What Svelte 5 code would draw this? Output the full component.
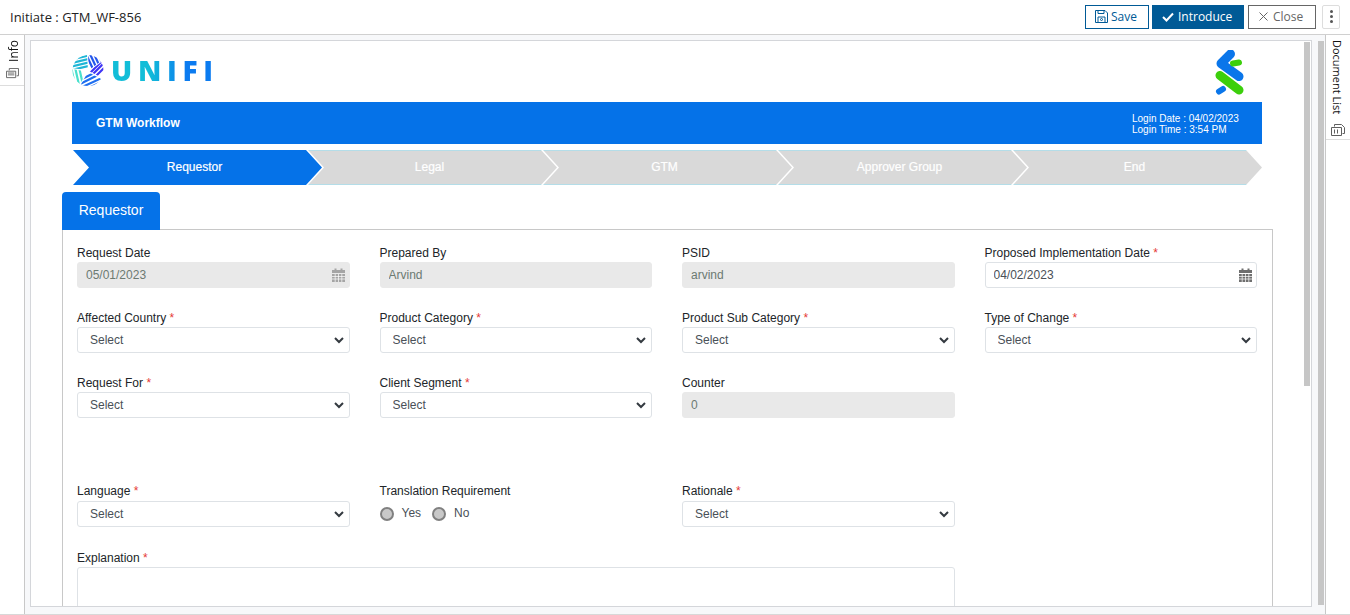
<script>
  const steps = ["Requestor", "Legal", "GTM", "Approver Group", "End"];

  const rows = [
    [
      { label: "Request Date", type: "date", value: "05/01/2023", disabled: true },
      { label: "Prepared By", type: "text", value: "Arvind", disabled: true },
      { label: "PSID", type: "text", value: "arvind", disabled: true },
      { label: "Proposed Implementation Date", type: "date", value: "04/02/2023", required: true },
    ],
    [
      { label: "Affected Country", type: "select", required: true },
      { label: "Product Category", type: "select", required: true },
      { label: "Product Sub Category", type: "select", required: true },
      { label: "Type of Change", type: "select", required: true },
    ],
    [
      { label: "Request For", type: "select", required: true },
      { label: "Client Segment", type: "select", required: true },
      { label: "Counter", type: "text", value: "0", disabled: true },
    ],
    [
      { label: "Language", type: "select", required: true },
      { label: "Translation Requirement", type: "radio" },
      { label: "Rationale", type: "select", required: true },
    ],
  ];
</script>

<div class="page">
  <header class="topbar">
    <span class="title">Initiate : GTM_WF-856</span>
    <div class="actions">
      <button class="btn save">
        <svg width="13" height="13" viewBox="0 0 13 13" fill="none" stroke="currentColor">
          <path d="M.5.5h9.5l2.5 2.5v9.500H.5z" />
          <path d="M3 .5v3h6v-3M3 12.500V7h7v5.500" />
          <circle cx="6.500" cy="9.500" r="1" />
        </svg>
        Save
      </button>
      <button class="btn primary">
        <svg width="12" height="10" viewBox="0 0 12 10" fill="none" stroke="currentColor" stroke-width="2">
          <path d="M1 5l3.500 3.500L11 1.500" />
        </svg>
        Introduce
      </button>
      <button class="btn close">
        <svg width="9" height="9" viewBox="0 0 9 9" fill="none" stroke="currentColor">
          <path d="M.5.5l8 8M8.500.5l-8 8" />
        </svg>
        Close
      </button>
      <button class="kebab" aria-label="More">
        <i></i><i></i><i></i>
      </button>
    </div>
  </header>

  <div class="body">
    <aside class="rail left">
      <div class="rail-item">
        <span class="rail-text up">Info</span>
        <svg width="13" height="11" viewBox="0 0 14 12" fill="none" stroke="#5f5f5f">
          <path d="M3.500 2.500V.5h10v8h-2" />
          <path d="M.5 3.500h10v7H.5z" fill="#fff" />
          <path d="M2 5.500h7M2 7.500h7" />
        </svg>
      </div>
    </aside>

    <main class="main">
      <div class="frame">
        <div class="sheet">
          <div class="logos">
            <div class="unifi">
              <svg width="32" height="31" viewBox="0 0 32 31" fill="none" stroke-width="2.200">
                <defs>
                  <clipPath id="disc"><circle cx="16" cy="15.500" r="15.500" /></clipPath>
                  <clipPath id="w1"><path d="M16 15.500L0 13V0H15z" /></clipPath>
                  <clipPath id="w2"><path d="M17 15L16 0H32V4z" /></clipPath>
                  <clipPath id="w3"><path d="M17 16L32 5V24z" /></clipPath>
                  <clipPath id="w4"><path d="M16 17L31 25V31H8z" /></clipPath>
                  <clipPath id="w5"><path d="M15 16.500L0 14V31H7z" /></clipPath>
                </defs>
                <g clip-path="url(#disc)">
                  <g clip-path="url(#w1)" stroke="#1fb6d6">
                    <path d="M0 4.500L17 .5M0 8L17 4M0 11.500L17 7.500M0 15L17 11" />
                  </g>
                  <g clip-path="url(#w2)" stroke="#2457ec">
                    <path d="M14 -1L21 14M18 -1L25 14M22 -1L29 14M26 -1L33 14" />
                  </g>
                  <g clip-path="url(#w3)" stroke="#3f35f5">
                    <path d="M16 20L32 4M18 22L34 6M20 25L36 9" />
                  </g>
                  <g clip-path="url(#w4)" stroke="#1f6ff0">
                    <path d="M8 25L30 14M8 29L30 18M8 33L32 22M10 36L34 25" />
                  </g>
                  <g clip-path="url(#w5)" stroke="#48e0cc">
                    <path d="M-1 12L3 30M3 12L7 30M7 12L11 30" />
                  </g>
                </g>
              </svg>
              <span class="wordmark">UNIFI</span>
            </div>
            <svg class="sc" width="30" height="46" viewBox="0 0 30 46" fill="none" stroke-linecap="round" stroke-linejoin="round" stroke-width="9">
              <path d="M15.500 4L6 13.500L24 26.500" stroke="#0a76ea" />
              <path d="M5 25.500L24 40" stroke="#3ccf0c" />
              <path d="M18 13.500L24 12.500" stroke="#3ccf0c" stroke-width="6" />
              <path d="M4 41.500L8 39" stroke="#0a76ea" stroke-width="6" />
            </svg>
          </div>

          <div class="banner">
            <strong>GTM Workflow</strong>
            <div class="login">
              <div>Login Date : 04/02/2023</div>
              <div>Login Time : 3:54 PM</div>
            </div>
          </div>

          <div class="steps">
            {#each steps as step, i}
              <div class="step" class:active={i === 0}>{step}</div>
            {/each}
          </div>

          <div class="tabs">
            <div class="tab">Requestor</div>
          </div>

          <section class="panel">
            {#each rows as row, r}
              <div class="row" class:spaced={r === 3}>
                {#each row as field}
                  <div class="field">
                    <label>
                      {field.label}
                      {#if field.required}<span class="req">*</span>{/if}
                    </label>

                    {#if field.type === "select"}
                      <div class="control">
                        <select>
                          <option>Select</option>
                        </select>
                        <svg class="chevron" width="10" height="7" viewBox="0 0 10 7" fill="none" stroke="#343a40" stroke-width="2">
                          <path d="M1 1l4 4 4-4" />
                        </svg>
                      </div>
                    {:else if field.type === "radio"}
                      <div class="radios">
                        <label class="radio"><input type="radio" disabled /> Yes</label>
                        <label class="radio"><input type="radio" disabled /> No</label>
                      </div>
                    {:else}
                      <div class="control">
                        <input type="text" value={field.value} disabled={field.disabled} />
                        {#if field.type === "date"}
                          <svg class="cal" class:muted={field.disabled} width="13" height="14" viewBox="0 0 13 14">
                            <path d="M0 2h2.500V.5h2V2h4V.5h2V2H13v3H0z" fill="currentColor" />
                            <path d="M0 6h13v8H0z" fill="currentColor" />
                            <path d="M0 8.500h13M0 11h13M3.200 6v8M6.500 6v8M9.800 6v8" stroke="#fff" stroke-width=".7" />
                          </svg>
                        {/if}
                      </div>
                    {/if}
                  </div>
                {/each}
              </div>
            {/each}

            <div class="row explain">
              <div class="field wide">
                <label>Explanation <span class="req">*</span></label>
                <textarea></textarea>
              </div>
            </div>
          </section>
        </div>

        <div class="scroll inner"></div>
      </div>
      <div class="scroll outer"></div>
    </main>

    <aside class="rail right">
      <div class="rail-item">
        <span class="rail-text down">Document List</span>
        <svg width="14" height="12" viewBox="0 0 14 12" fill="none" stroke="#5f5f5f">
          <path d="M3.500 2.500V.5h7l3 3v6h-2" />
          <path d="M.5 3.500h10v8H.5z" fill="#fff" />
          <path d="M3.500 5.500v4M6.500 5.500v4" />
        </svg>
      </div>
    </aside>
  </div>
</div>

<style>
  :global(body) {
    margin: 0;
    background: #fff;
  }

  .page {
    display: flex;
    flex-direction: column;
    height: 615px;
    overflow: hidden;
    font-family: "Liberation Sans", Arial, sans-serif;
    font-size: 12px;
    color: #212529;
  }

  .topbar {
    flex: none;
    height: 35px;
    box-sizing: border-box;
    display: flex;
    align-items: center;
    justify-content: space-between;
    padding: 0 10px;
    border-bottom: 1px solid #d0d0d0;
    font-family: "Open Sans", sans-serif;
  }

  .title {
    font-size: 13px;
    color: #222;
  }

  .actions {
    display: flex;
    align-items: center;
    margin-top: -1px;
  }

  .btn {
    display: flex;
    align-items: center;
    justify-content: flex-start;
    gap: 4px;
    height: 24px;
    box-sizing: border-box;
    padding: 0 0 0 9px;
    background: #fff;
    border: 1px solid #005a96;
    color: #005a96;
    font-family: "Open Sans", sans-serif;
    font-size: 12px;
  }

  .save {
    width: 64px;
    gap: 3px;
  }

  .primary {
    width: 92px;
    margin-left: 3px;
    background: #005a96;
    color: #fff;
  }

  .close {
    width: 68px;
    margin-left: 4px;
    gap: 5px;
    padding-left: 10px;
    border-color: #666;
    color: #666;
  }

  .kebab {
    width: 18px;
    height: 24px;
    margin-left: 6px;
    padding: 0;
    box-sizing: border-box;
    display: flex;
    flex-direction: column;
    align-items: center;
    justify-content: center;
    gap: 2px;
    background: #fff;
    border: 1px solid #ddd;
    border-radius: 2px;
  }

  .kebab i {
    width: 3px;
    height: 3px;
    border-radius: 50%;
    background: #555;
  }

  .body {
    flex: 1;
    display: flex;
    min-height: 0;
    border-bottom: 1px solid #d8d8d8;
  }

  .rail {
    flex: none;
    box-sizing: border-box;
    background: #fff;
  }

  .rail.left {
    width: 25px;
    border-right: 1px solid #c8c8c8;
  }

  .rail.right {
    width: 25px;
    border-left: 1px solid #c8c8c8;
  }

  .rail-item {
    display: flex;
    flex-direction: column;
    align-items: center;
    gap: 6px;
    padding: 5px 0 6px;
    border-bottom: 1px solid #ddd;
    font-family: "Open Sans", sans-serif;
    font-size: 11px;
    color: #111;
  }

  .rail.left .rail-text {
    font-size: 12px;
    margin-left: 3px;
  }

  .rail.right .rail-item {
    gap: 10px;
    padding-bottom: 3px;
  }

  .rail.right .rail-text {
    margin-right: 2px;
  }

  .rail-text {
    writing-mode: vertical-rl;
    line-height: 14px;
  }

  .rail-text.up {
    transform: rotate(180deg);
  }

  .main {
    flex: 1;
    position: relative;
    display: flex;
    min-width: 0;
    background: #f7f8fa;
    padding: 5px 13px 7px 5px;
  }

  .frame {
    flex: 1;
    position: relative;
    min-width: 0;
    border: 1px solid #d4d6da;
    background: #fff;
    overflow: hidden;
  }

  .sheet {
    box-sizing: border-box;
    padding: 14px 49px 0 31px;
  }

  .logos {
    display: flex;
    align-items: flex-start;
    justify-content: space-between;
    height: 47px;
    padding: 0 17px 0 10px;
  }

  .unifi {
    display: flex;
    align-items: center;
    gap: 7px;
    height: 31px;
  }

  .wordmark {
    font-family: "Open Sans", sans-serif;
    font-weight: 800;
    font-size: 28px;
    line-height: 31px;
    letter-spacing: 5.700px;
    background: linear-gradient(90deg, #12bdd8 0%, #12bdd8 35%, #0b7bf0 70%, #0b7bf0 100%);
    -webkit-background-clip: text;
    background-clip: text;
    color: transparent;
  }

  .sc {
    margin-top: -5px;
  }

  .banner {
    margin-left: 10px;
    height: 42px;
    box-sizing: border-box;
    display: flex;
    align-items: center;
    justify-content: space-between;
    padding: 0 24px;
    background: #0572e8;
    color: #fff;
  }

  .banner strong {
    font-size: 12px;
  }

  .login {
    font-size: 10px;
    line-height: 11px;
    width: 106px;
    margin-top: 1px;
    white-space: nowrap;
  }

  .steps {
    display: flex;
    margin: 6px 0 0 11px;
  }

  .step {
    flex: none;
    width: 249px;
    height: 35px;
    box-sizing: border-box;
    margin-right: -14px;
    padding: 0 6px 2px 0;
    display: flex;
    align-items: center;
    justify-content: center;
    font-size: 12px;
    -webkit-text-stroke: 0.2px #fff;
    color: #fff;
    background: linear-gradient(#b4dde8 1px, #d9d9d9 1px, #d9d9d9 34px, #b4dde8 34px);
    clip-path: polygon(0 0, 233px 0, 249px 17.500px, 233px 35px, 0 35px, 16px 17.500px);
  }

  .step.active {
    background: #0572e8;
  }

  .tabs {
    display: flex;
    margin-top: 7px;
    height: 38px;
  }

  .tab {
    width: 98px;
    box-sizing: border-box;
    height: 38px;
    padding-bottom: 2px;
    display: flex;
    align-items: center;
    justify-content: center;
    background: #0572e8;
    border-radius: 4px 4px 0 0;
    color: #fff;
    font-size: 14px;
  }

  .panel {
    box-sizing: border-box;
    width: 1211px;
    min-height: 400px;
    padding: 16px 15px 0 14px;
    border: 1px solid #c8c8c8;
    margin-top: -1px;
  }

  .row {
    display: grid;
    grid-template-columns: repeat(4, 272.500px);
    column-gap: 30px;
    margin-bottom: 23px;
    min-height: 42px;
  }

  .row.spaced {
    margin-top: 67px;
    margin-bottom: 24px;
  }

  .field {
    display: flex;
    flex-direction: column;
    min-width: 0;
  }

  .field.wide {
    grid-column: span 3;
  }

  .field > label {
    height: 16px;
    line-height: 14px;
    color: #212529;
  }

  .row.spaced .field > label {
    height: 17px;
    margin-top: -1px;
  }

  .req {
    color: #e53935;
  }

  .control {
    position: relative;
    height: 26px;
  }

  select,
  input[type="text"],
  textarea {
    display: block;
    box-sizing: border-box;
    width: 100%;
    margin: 0;
    border: 1px solid #dee2e6;
    border-radius: 3px;
    background: #fff;
    font-family: inherit;
    font-size: 12px;
    color: #495057;
    outline: none;
  }

  select,
  input[type="text"] {
    height: 26px;
    padding: 0 8px;
  }

  select {
    appearance: none;
    padding-left: 12px;
  }

  input[type="text"]:disabled {
    background: #e9e9e9;
    border-color: #e9e9e9;
    color: #6c7a72;
    opacity: 1;
  }

  textarea {
    height: 70px;
    resize: none;
  }

  .chevron {
    position: absolute;
    right: 6px;
    top: 10px;
    pointer-events: none;
  }

  .cal {
    position: absolute;
    right: 5px;
    top: 6px;
    color: #6f6f6f;
    pointer-events: none;
  }

  .cal.muted {
    color: #a5a5a5;
  }

  .radios {
    display: flex;
    gap: 11px;
    height: 26px;
    margin-top: -1px;
    align-items: center;
    color: #495057;
  }

  .radio {
    display: flex;
    align-items: center;
    gap: 8px;
  }

  .radio input {
    appearance: none;
    width: 14px;
    height: 14px;
    margin: 2px 0 0;
    border: 2px solid #808080;
    border-radius: 50%;
    background: #c8c8c8;
    box-sizing: border-box;
  }

  .scroll {
    position: absolute;
    width: 6px;
    background: #c6c6c6;
  }

  .scroll.inner {
    top: 1px;
    right: 1px;
    height: 344px;
  }

  .scroll.outer {
    top: 6px;
    right: 1px;
    bottom: 9px;
  }
</style>
